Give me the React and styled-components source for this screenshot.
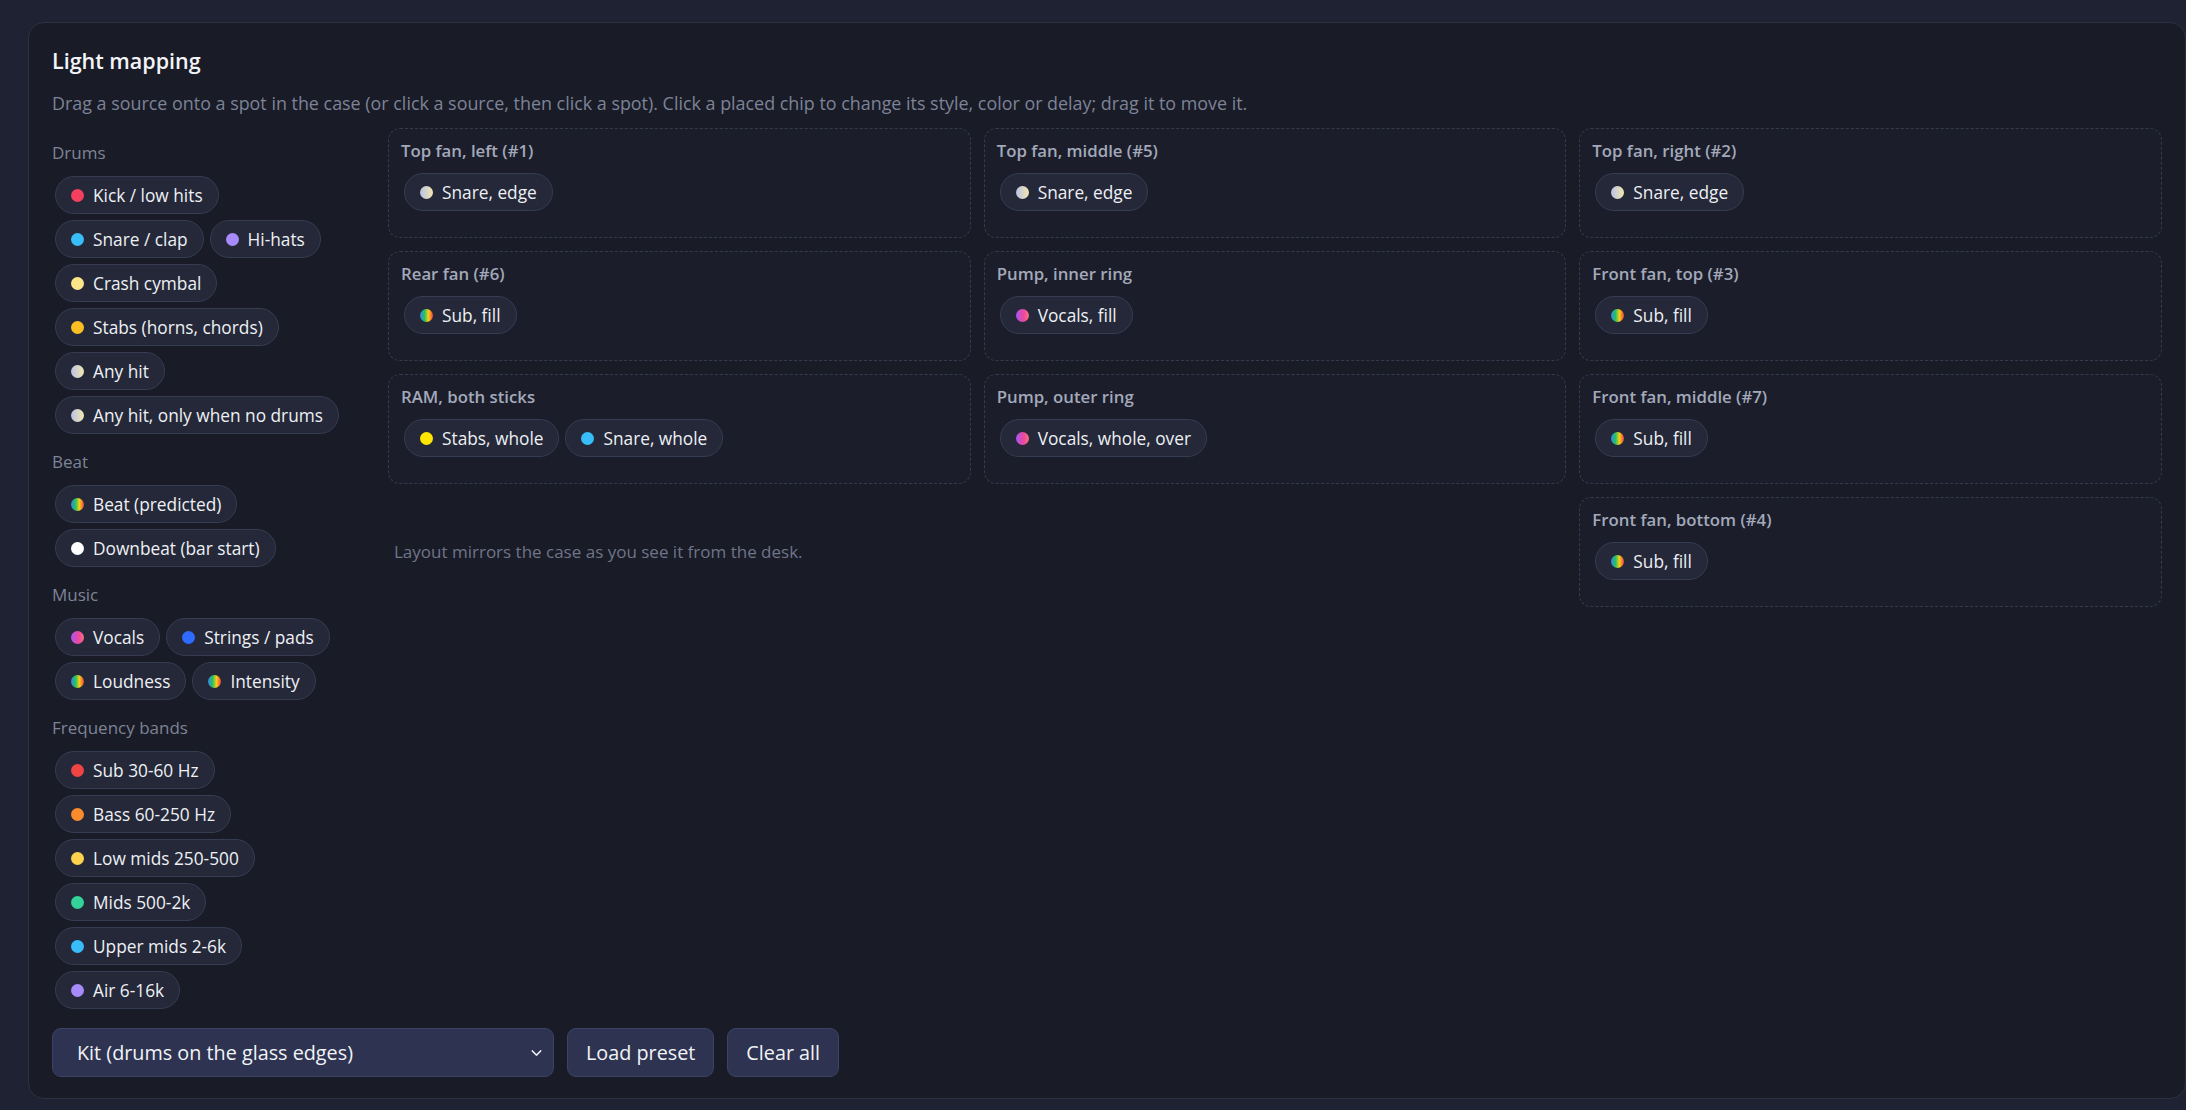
import React from "react";
import styled, { createGlobalStyle } from "styled-components";
import { ChevronDown } from "lucide-react";

const RAINBOW = "linear-gradient(90deg, #3b82f6 0%, #22c55e 35%, #facc15 65%, #ef4444 100%)";
const PALE = "linear-gradient(90deg, #b9c3e6 0%, #f3e7b0 100%)";
const VOCAL = "linear-gradient(90deg, #a855f7 0%, #ec4899 60%, #fb7185 100%)";

const sources = [
  {
    label: "Drums",
    items: [
      { name: "Kick / low hits", color: "#f43f5e" },
      { name: "Snare / clap", color: "#38bdf8" },
      { name: "Hi-hats", color: "#a78bfa" },
      { name: "Crash cymbal", color: "#fde68a" },
      { name: "Stabs (horns, chords)", color: "#fbbf24" },
      { name: "Any hit", color: PALE },
      { name: "Any hit, only when no drums", color: PALE },
    ],
  },
  {
    label: "Beat",
    items: [
      { name: "Beat (predicted)", color: RAINBOW },
      { name: "Downbeat (bar start)", color: "#ffffff" },
    ],
  },
  {
    label: "Music",
    items: [
      { name: "Vocals", color: VOCAL },
      { name: "Strings / pads", color: "#2f6bff" },
      { name: "Loudness", color: RAINBOW },
      { name: "Intensity", color: RAINBOW },
    ],
  },
  {
    label: "Frequency bands",
    items: [
      { name: "Sub 30-60 Hz", color: "#ef4444" },
      { name: "Bass 60-250 Hz", color: "#fb8c2b" },
      { name: "Low mids 250-500", color: "#fcd34d" },
      { name: "Mids 500-2k", color: "#34d399" },
      { name: "Upper mids 2-6k", color: "#38bdf8" },
      { name: "Air 6-16k", color: "#a78bfa" },
    ],
  },
];

const snareEdge = { name: "Snare, edge", color: PALE };
const subFill = { name: "Sub, fill", color: RAINBOW };

// grid order, row by row
const spots = [
  { title: "Top fan, left (#1)", chips: [snareEdge] },
  { title: "Top fan, middle (#5)", chips: [snareEdge] },
  { title: "Top fan, right (#2)", chips: [snareEdge] },
  { title: "Rear fan (#6)", chips: [subFill] },
  { title: "Pump, inner ring", chips: [{ name: "Vocals, fill", color: VOCAL }] },
  { title: "Front fan, top (#3)", chips: [subFill] },
  {
    title: "RAM, both sticks",
    chips: [
      { name: "Stabs, whole", color: "#ffe600" },
      { name: "Snare, whole", color: "#38bdf8" },
    ],
  },
  { title: "Pump, outer ring", chips: [{ name: "Vocals, whole, over", color: VOCAL }] },
  { title: "Front fan, middle (#7)", chips: [subFill] },
  { hint: "Layout mirrors the case as you see it from the desk." },
  { title: "Front fan, bottom (#4)", chips: [subFill] },
];

const App = () => {
  return (
    <>
      <GlobalStyle />
      <Panel>
        <Title>Light mapping</Title>
        <Description>
          Drag a source onto a spot in the case (or click a source, then click a spot). Click a
          placed chip to change its style, color or delay; drag it to move it.
        </Description>
        <Body>
          <Sources>
            {sources.map((group) => (
              <React.Fragment key={group.label}>
                <GroupLabel>{group.label}</GroupLabel>
                <ChipWrap>
                  {group.items.map((item) => (
                    <Chip key={item.name}>
                      <Dot $color={item.color} />
                      {item.name}
                    </Chip>
                  ))}
                </ChipWrap>
              </React.Fragment>
            ))}
          </Sources>
          <SpotGrid>
            {spots.map((spot, i) =>
              spot.hint ? (
                <Hint key={i}>{spot.hint}</Hint>
              ) : (
                <Spot key={spot.title}>
                  <SpotTitle>{spot.title}</SpotTitle>
                  <ChipWrap>
                    {spot.chips.map((chip) => (
                      <Chip key={chip.name}>
                        <Dot $color={chip.color} />
                        {chip.name}
                      </Chip>
                    ))}
                  </ChipWrap>
                </Spot>
              )
            )}
          </SpotGrid>
        </Body>
        <Footer>
          <SelectBox>
            <Select defaultValue="kit">
              <option value="kit">Kit (drums on the glass edges)</option>
            </Select>
            <Chevron>
              <ChevronDown size={17} strokeWidth={2} />
            </Chevron>
          </SelectBox>
          <Button>Load preset</Button>
          <Button>Clear all</Button>
        </Footer>
      </Panel>
    </>
  );
};

export default App;

const GlobalStyle = createGlobalStyle`
  * { box-sizing: border-box; }
  html, body {
    margin: 0;
    background: #1f2232;
    font-family: "Open Sans", "Noto Sans", sans-serif;
    color: #eef0f5;
  }
`;

const Panel = styled.section`
  margin: 22px 0 12px 28px;
  background: #191b26;
  border: 1px solid #2c3040;
  border-radius: 16px;
  padding: 24px 23px 21px 23px;
`;

const Title = styled.h2`
  margin: 0 0 17px;
  font-size: 21.5px;
  line-height: 28px;
  font-weight: 600;
  color: #f3f4f8;
`;

const Description = styled.p`
  margin: 0 0 14px;
  font-size: 17.9px;
  line-height: 22px;
  color: #7d8398;
`;

const Body = styled.div`
  display: grid;
  grid-template-columns: 310px 1fr;
  gap: 26px;
  align-items: start;
`;

const Sources = styled.div`
  display: flex;
  flex-direction: column;
  padding-top: 14px;
`;

const GroupLabel = styled.div`
  font-size: 17px;
  line-height: 22px;
  color: #7e8497;
  margin-bottom: 9px;

  & ~ & {
    margin-top: 14px;
  }
`;

const ChipWrap = styled.div`
  display: flex;
  flex-wrap: wrap;
`;

const Chip = styled.span`
  display: inline-flex;
  align-items: center;
  gap: 9px;
  height: 38px;
  margin: 3px;
  padding: 0 15px 0 15px;
  background: #242838;
  border: 1px solid #363c52;
  border-radius: 999px;
  font-size: 17.3px;
  color: #eef0f5;
  white-space: nowrap;
  cursor: grab;
`;

const Dot = styled.span`
  width: 13px;
  height: 13px;
  border-radius: 50%;
  flex: none;
  background: ${(p) => p.$color};
`;

const SpotGrid = styled.div`
  display: grid;
  grid-template-columns: repeat(3, 1fr);
  gap: 13px 13px;
`;

const Spot = styled.div`
  min-height: 110px;
  padding: 11px 12px 12px;
  border: 1px dashed #353a4d;
  border-radius: 12px;
  background: #1b1e2a;
`;

const SpotTitle = styled.div`
  font-size: 16.8px;
  line-height: 22px;
  font-weight: 600;
  color: #a3a9ba;
  margin-bottom: 8px;
`;

const Hint = styled.div`
  grid-column: span 2;
  align-self: center;
  padding-left: 6px;
  font-size: 17px;
  line-height: 22px;
  color: #6f7589;
`;

const Footer = styled.div`
  display: flex;
  gap: 13px;
  margin-top: 16px;
`;

const SelectBox = styled.div`
  position: relative;
  width: 502px;
`;

const Select = styled.select`
  appearance: none;
  width: 100%;
  height: 49px;
  padding: 0 40px 0 24px;
  background: #2d3350;
  border: 1px solid #3c4364;
  border-radius: 9px;
  color: #f1f3f8;
  font-family: inherit;
  font-size: 19.8px;
`;

const Chevron = styled.span`
  position: absolute;
  right: 9px;
  top: 50%;
  transform: translateY(-50%);
  display: flex;
  color: #e8eaf2;
  pointer-events: none;
`;

const Button = styled.button`
  height: 49px;
  padding: 0 18px;
  background: #2d3350;
  border: 1px solid #3c4364;
  border-radius: 9px;
  color: #f1f3f8;
  font-family: inherit;
  font-size: 19.8px;
  cursor: pointer;
`;
